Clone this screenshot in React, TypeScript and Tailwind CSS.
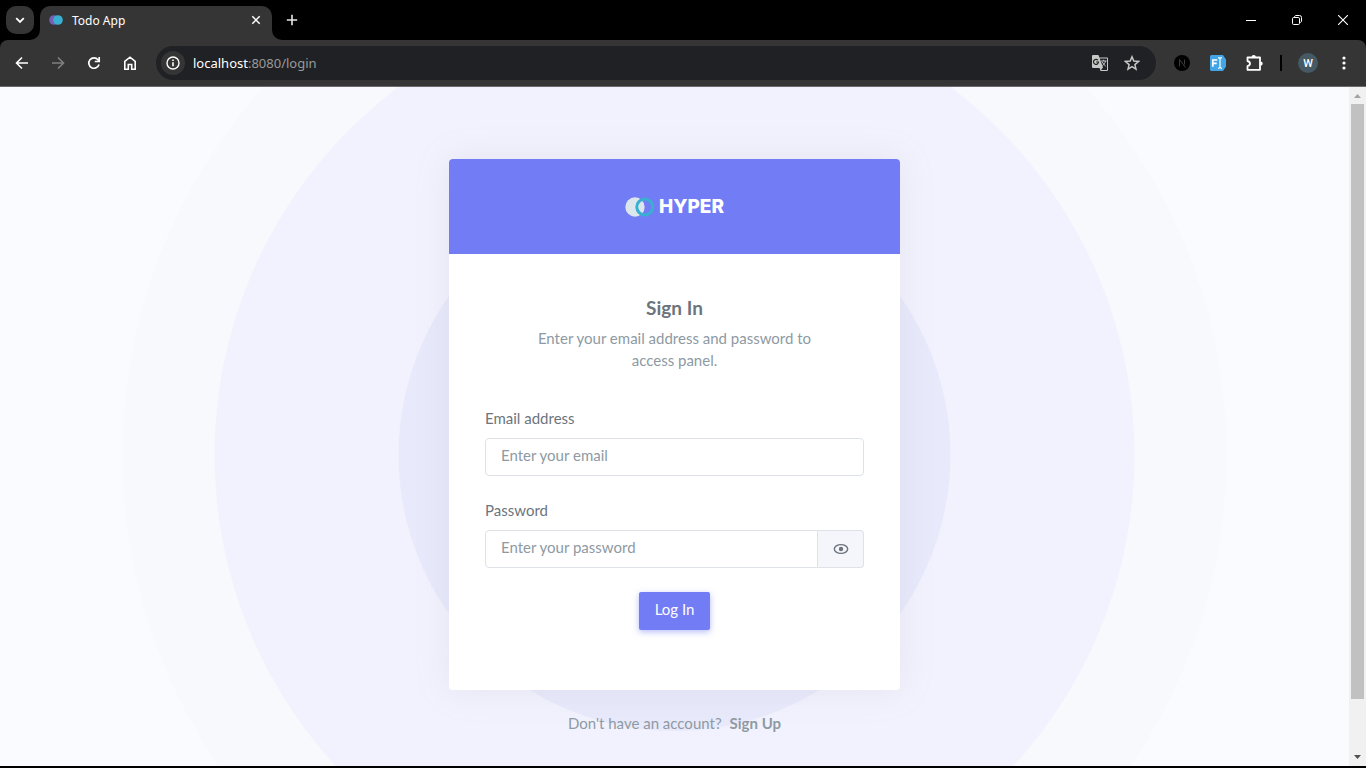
import React, { useState } from "react";

const chromeFont = "font-['Noto_Sans','Open_Sans',sans-serif]";
const iconButton = "flex h-9 w-9 shrink-0 items-center justify-center rounded-full";

function TabStrip() {
  return (
    <div className="flex h-10 bg-black">
      <div className="flex w-10 shrink-0 items-center justify-center">
        <button aria-label="Search tabs" className="flex size-7 items-center justify-center rounded-[10px] bg-[#353535]">
          <svg width="16" height="16" viewBox="0 0 16 16" fill="none" stroke="#fff" strokeWidth="1.8">
            <path d="M4.200 6.200L8 10l3.800-3.800" />
          </svg>
        </button>
      </div>
      <div className="relative mt-[6px] flex w-[232px] shrink-0 items-center rounded-t-[10px] bg-[#353535] pb-[6px] pl-[9px] pr-2">
        <svg className="absolute bottom-0 -left-[10px]" width="10" height="10" viewBox="0 0 10 10">
          <path d="M10 0v10H0A10 10 0 0 0 10 0z" fill="#353535" />
        </svg>
        <svg className="absolute bottom-0 -right-[10px]" width="10" height="10" viewBox="0 0 10 10">
          <path d="M0 0v10h10A10 10 0 0 1 0 0z" fill="#353535" />
        </svg>
        <svg className="shrink-0" width="14" height="12" viewBox="0 0 14 12">
          <circle cx="5" cy="6" r="4.8" fill="#7460b4" />
          <circle cx="9" cy="6" r="4.8" fill="#39afd1" />
        </svg>
        <span className="ml-[9px] flex-1 pt-[2px] text-xs text-white">Todo App</span>
        <button aria-label="Close tab" className="flex size-4 items-center justify-center">
          <svg width="10" height="10" viewBox="0 0 10 10" stroke="#fff" strokeWidth="1.5">
            <path d="M1.300 1.300l7.400 7.400M8.700 1.300L1.300 8.700" />
          </svg>
        </button>
      </div>
      <button aria-label="New tab" className="ml-[6px] flex size-7 items-center justify-center self-center">
        <svg width="12" height="12" viewBox="0 0 12 12" stroke="#e6e6e6" strokeWidth="1.600">
          <path d="M6 .8v10.400M.8 6h10.400" />
        </svg>
      </button>
      <div className="ml-auto flex">
        <button aria-label="Minimize" className="flex w-[46px] items-center justify-center">
          <svg width="10" height="10" viewBox="0 0 10 10" stroke="#fff">
            <path d="M0 5.500h10" />
          </svg>
        </button>
        <button aria-label="Restore" className="flex w-[46px] items-center justify-center">
          <svg width="10" height="10" viewBox="0 0 10 10" fill="none" stroke="#fff">
            <rect x=".5" y="2.500" width="7" height="7" rx="1.200" />
            <path d="M2.500 2.200C2.500 1.200 3.200.5 4 .5h3.500A2 2 0 0 1 9.500 2.500V6c0 .8-.6 1.500-1.700 1.500" />
          </svg>
        </button>
        <button aria-label="Close window" className="flex w-[46px] items-center justify-center">
          <svg width="10" height="10" viewBox="0 0 10 10" stroke="#fff" strokeWidth="1.100">
            <path d="M0 0l10 10M10 0L0 10" />
          </svg>
        </button>
      </div>
    </div>
  );
}

function Toolbar() {
  return (
    <div className="bg-black">
      <div className="flex h-[47px] items-center rounded-t-[8px] border-b border-[#6a6a6a] bg-[#353535] px-1">
        <button aria-label="Back" className={iconButton}>
          <svg width="14" height="14" viewBox="0 0 14 14" fill="none" stroke="#fff" strokeWidth="1.600">
            <path d="M13 7H2M7 1.500L1.500 7 7 12.500" />
          </svg>
        </button>
        <button aria-label="Forward" className={iconButton}>
          <svg width="14" height="14" viewBox="0 0 14 14" fill="none" stroke="#808080" strokeWidth="1.600">
            <path d="M1 7h11M7 1.500L12.500 7 7 12.500" />
          </svg>
        </button>
        <button aria-label="Reload" className={iconButton}>
          <svg width="14" height="14" viewBox="0 0 14 14" fill="none" stroke="#fff" strokeWidth="1.700">
            <path d="M12 8.500A5.200 5.200 0 1 1 11 3.700L12 5" />
            <path d="M12.200 1v4.500H7.800" />
          </svg>
        </button>
        <button aria-label="Home" className={iconButton}>
          <svg width="14" height="14" viewBox="0 0 14 14" fill="none" stroke="#fff" strokeWidth="1.600">
            <path d="M1.800 5.300L7 1.200l5.200 4.100v7.900H8.700V8.500H5.300v4.700H1.800z" />
          </svg>
        </button>
        <div className="ml-2 flex h-[34px] min-w-0 flex-1 items-center rounded-full bg-[#202124] pl-[5px] pr-2">
          <button aria-label="View site information" className="flex size-6 shrink-0 items-center justify-center rounded-full bg-[#353535]">
            <svg width="14" height="14" viewBox="0 0 14 14" fill="none" stroke="#fff" strokeWidth="1.400">
              <circle cx="7" cy="7" r="6" />
              <path d="M7 6.200v4M7 3.500v1.500" strokeWidth="1.600" />
            </svg>
          </button>
          <a href="http://localhost:8080/login" className="ml-2 flex-1 truncate pt-px text-[13px] text-[#9a9a9a]">
            <span className="text-white">localhost</span>:8080/login
          </a>
          <button aria-label="Translate this page" className="flex size-8 items-center justify-center">
            <svg width="18" height="18" viewBox="0 0 18 18">
              <path d="M2 1h5.500l.8 2.500H16a1 1 0 0 1 1 1V16a1 1 0 0 1-1 1H9.500L8.600 14H2a1 1 0 0 1-1-1V2a1 1 0 0 1 1-1z" fill="#c7c7c7" />
              <path d="M8.800 4.500H16V16H10l2-2.500z" fill="#202124" />
              <path d="M10 7h5.500M12.700 5.800V7M14.500 7c-.4 2-1.700 3.700-3.200 4.800M11.200 7.800c.8 1.800 2 3.200 3.500 4.300" fill="none" stroke="#c7c7c7" />
              <path d="M6.900 6.200A2.500 2.500 0 1 0 7.500 8H5.200" fill="none" stroke="#202124" strokeWidth="1.200" />
            </svg>
          </button>
          <button aria-label="Bookmark this tab" className="flex size-8 items-center justify-center">
            <svg width="16" height="16" viewBox="0 0 16 16" fill="none" stroke="#c7c7c7" strokeWidth="1.500">
              <path d="M8 1.800l1.800 4.300 4.700.4-3.600 3.100 1.100 4.600L8 11.700l-4 2.500 1.100-4.600L1.500 6.500l4.700-.4z" />
            </svg>
          </button>
        </div>
        <div className="ml-2 flex items-center">
          <button aria-label="Extension N" className={iconButton}>
            <svg width="16" height="16" viewBox="0 0 16 16">
              <circle cx="8" cy="8" r="8" fill="#000" />
              <path d="M5.500 11.500v-7l6 8M10.500 4.500v5" fill="none" stroke="#3d3d3d" />
            </svg>
          </button>
          <button aria-label="Extension F" className={iconButton}>
            <svg width="16" height="16" viewBox="0 0 16 16">
              <path d="M1.500 0h11.500L16 4.500v7L13 16H1.500A1.500 1.500 0 0 1 0 14.500v-13A1.500 1.500 0 0 1 1.500 0z" fill="#42a5e8" />
              <path d="M2.800 11.800V5h4.500M2.800 8.300h3.900" fill="none" stroke="#fff" strokeWidth="1.700" />
              <path d="M8 2.700c1 0 2 .3 2 1.200 0-.9 1-1.200 2-1.200M10 3.700v8.600M8 13.300c1 0 2-.3 2-1.200 0 .9 1 1.200 2 1.200" fill="none" stroke="#fff" strokeWidth="1.200" />
            </svg>
          </button>
          <button aria-label="Extensions" className={iconButton}>
            <svg width="18" height="18" viewBox="0 0 18 18">
              <path
                d="M2.500 3.500H15V15.800H2.500V12.200C4.200 11.800 5 10.900 5 9.600S4.200 7.400 2.500 7z"
                fill="none"
                stroke="#fff"
                strokeWidth="1.800"
                strokeLinejoin="round"
              />
              <path d="M6.500 3.300a2.200 2.200 0 0 1 4.400 0zM15.500 7.400a2.200 2.200 0 0 1 0 4.400z" fill="#fff" />
            </svg>
          </button>
          <span className="mx-2 h-4 w-[2px] bg-black" />
          <button aria-label="Profile W" className={iconButton}>
            <span className="flex size-5 items-center justify-center rounded-full bg-[#455a64] font-['Roboto',sans-serif] text-[11px] font-medium leading-none text-white">W</span>
          </button>
          <button aria-label="Browser menu" className={iconButton}>
            <svg width="4" height="14" viewBox="0 0 4 14" fill="#fff">
              <circle cx="2" cy="2" r="1.600" />
              <circle cx="2" cy="7" r="1.600" />
              <circle cx="2" cy="12" r="1.600" />
            </svg>
          </button>
        </div>
      </div>
    </div>
  );
}

function Backdrop() {
  return (
    <svg className="absolute inset-0 size-full" viewBox="0 0 800 800" aria-hidden="true">
      <circle cx="400" cy="400" r="600" fill="#f7f9fd" />
      <circle cx="400" cy="400" r="500" fill="#f2f2fe" />
      <circle cx="400" cy="400" r="300" fill="#e8e9fb" />
    </svg>
  );
}

function LoginCard() {
  const [visible, setVisible] = useState(false);
  const field =
    "h-[38px] w-full min-w-0 rounded-[4px] border border-[#dee2e6] bg-white px-[15px] pb-[5px] text-[#6c757d] outline-none placeholder:text-[#8e9aa3] placeholder:opacity-100";
  return (
    <section className="w-full max-w-[451px] rounded-[4px] bg-white shadow-[0_0_35px_0_rgba(154,161,171,0.15)]">
      <header className="flex h-[95px] items-center justify-center rounded-t-[4px] bg-[#727cf5]">
        <a href="#home" aria-label="Hyper" className="flex items-center gap-1">
          <svg width="30" height="20" viewBox="0 0 30 20">
            <circle cx="10" cy="10" r="9.700" fill="#dbe7ec" />
            <circle cx="19.800" cy="10" r="8" fill="none" stroke="#39afd1" strokeWidth="3" />
          </svg>
          <span className="pt-px font-['Inter',sans-serif] text-[19px] font-extrabold leading-5 text-white">HYPER</span>
        </a>
      </header>
      <div className="px-9 pb-[60px] pt-[43px]">
        <div className="mx-auto max-w-[284px] text-center">
          <h4 className="text-[19px] font-bold leading-[22px] text-[#6c757d]">Sign In</h4>
          <p className="mt-2 leading-[22px] text-[#8e9aa3]">Enter your email address and password to access panel.</p>
        </div>
        <form className="mt-9" onSubmit={(e) => e.preventDefault()}>
          <label htmlFor="email" className="block leading-[22px]">Email address</label>
          <input id="email" type="email" placeholder="Enter your email" className={field + " mt-[9px]"} />
          <label htmlFor="password" className="mt-[23px] block leading-[22px]">Password</label>
          <div className="mt-[9px] flex">
            <input id="password" type={visible ? "text" : "password"} placeholder="Enter your password" className={field + " rounded-r-none"} />
            <button
              type="button"
              aria-label="Show password"
              onClick={() => setVisible(!visible)}
              className="flex w-[46px] shrink-0 items-center justify-center rounded-r-[4px] border border-l-0 border-[#dee2e6] bg-[#f4f6fb]"
            >
              <svg width="16" height="12" viewBox="0 0 16 12" fill="none" stroke="#6c757d" strokeWidth="1.400">
                <ellipse cx="8" cy="6" rx="6.700" ry="4.400" />
                <circle cx="8" cy="6" r="2.200" fill="#6c757d" stroke="none" />
              </svg>
            </button>
          </div>
          <div className="mt-6 text-center">
            <button type="submit" className="h-[38px] rounded-[2px] bg-[#727cf5] px-4 pb-1 text-white shadow-[0_2px_6px_0_rgba(114,124,245,0.5)]">
              Log In
            </button>
          </div>
        </form>
      </div>
    </section>
  );
}

function Scrollbar() {
  return (
    <div className="flex w-[17px] shrink-0 flex-col items-center bg-[#f1f1f1]">
      <svg className="shrink-0" width="17" height="17" viewBox="0 0 17 17"><path d="M5 11l3.500-4 3.500 4z" fill="#a3a3a3" /></svg>
      <div className="h-[595px] w-[13px] bg-[#c1c1c1]" />
      <svg className="mt-auto shrink-0" width="17" height="17" viewBox="0 0 17 17"><path d="M5 6l3.500 4L12 6z" fill="#505050" /></svg>
    </div>
  );
}

export default function App() {
  return (
    <div className="flex h-screen flex-col bg-black">
      <div className={chromeFont}>
        <TabStrip />
        <Toolbar />
      </div>
      <div className="mb-[2px] flex min-h-0 flex-1">
        <main className="min-w-0 flex-1 overflow-hidden bg-[#fafbfe]">
          <div className="relative flex min-h-[736px] flex-col items-center overflow-hidden pt-[72px] font-['Lato',sans-serif] text-[15px] text-[#6c757d]">
            <Backdrop />
            <div className="relative flex w-full flex-col items-center">
              <LoginCard />
              <p className="mt-[22px] leading-[22px] text-[#8e9aa3]">
                Don't have an account?
                <a href="#signup" className="ml-2 font-bold">Sign Up</a>
              </p>
            </div>
          </div>
        </main>
        <Scrollbar />
      </div>
    </div>
  );
}
